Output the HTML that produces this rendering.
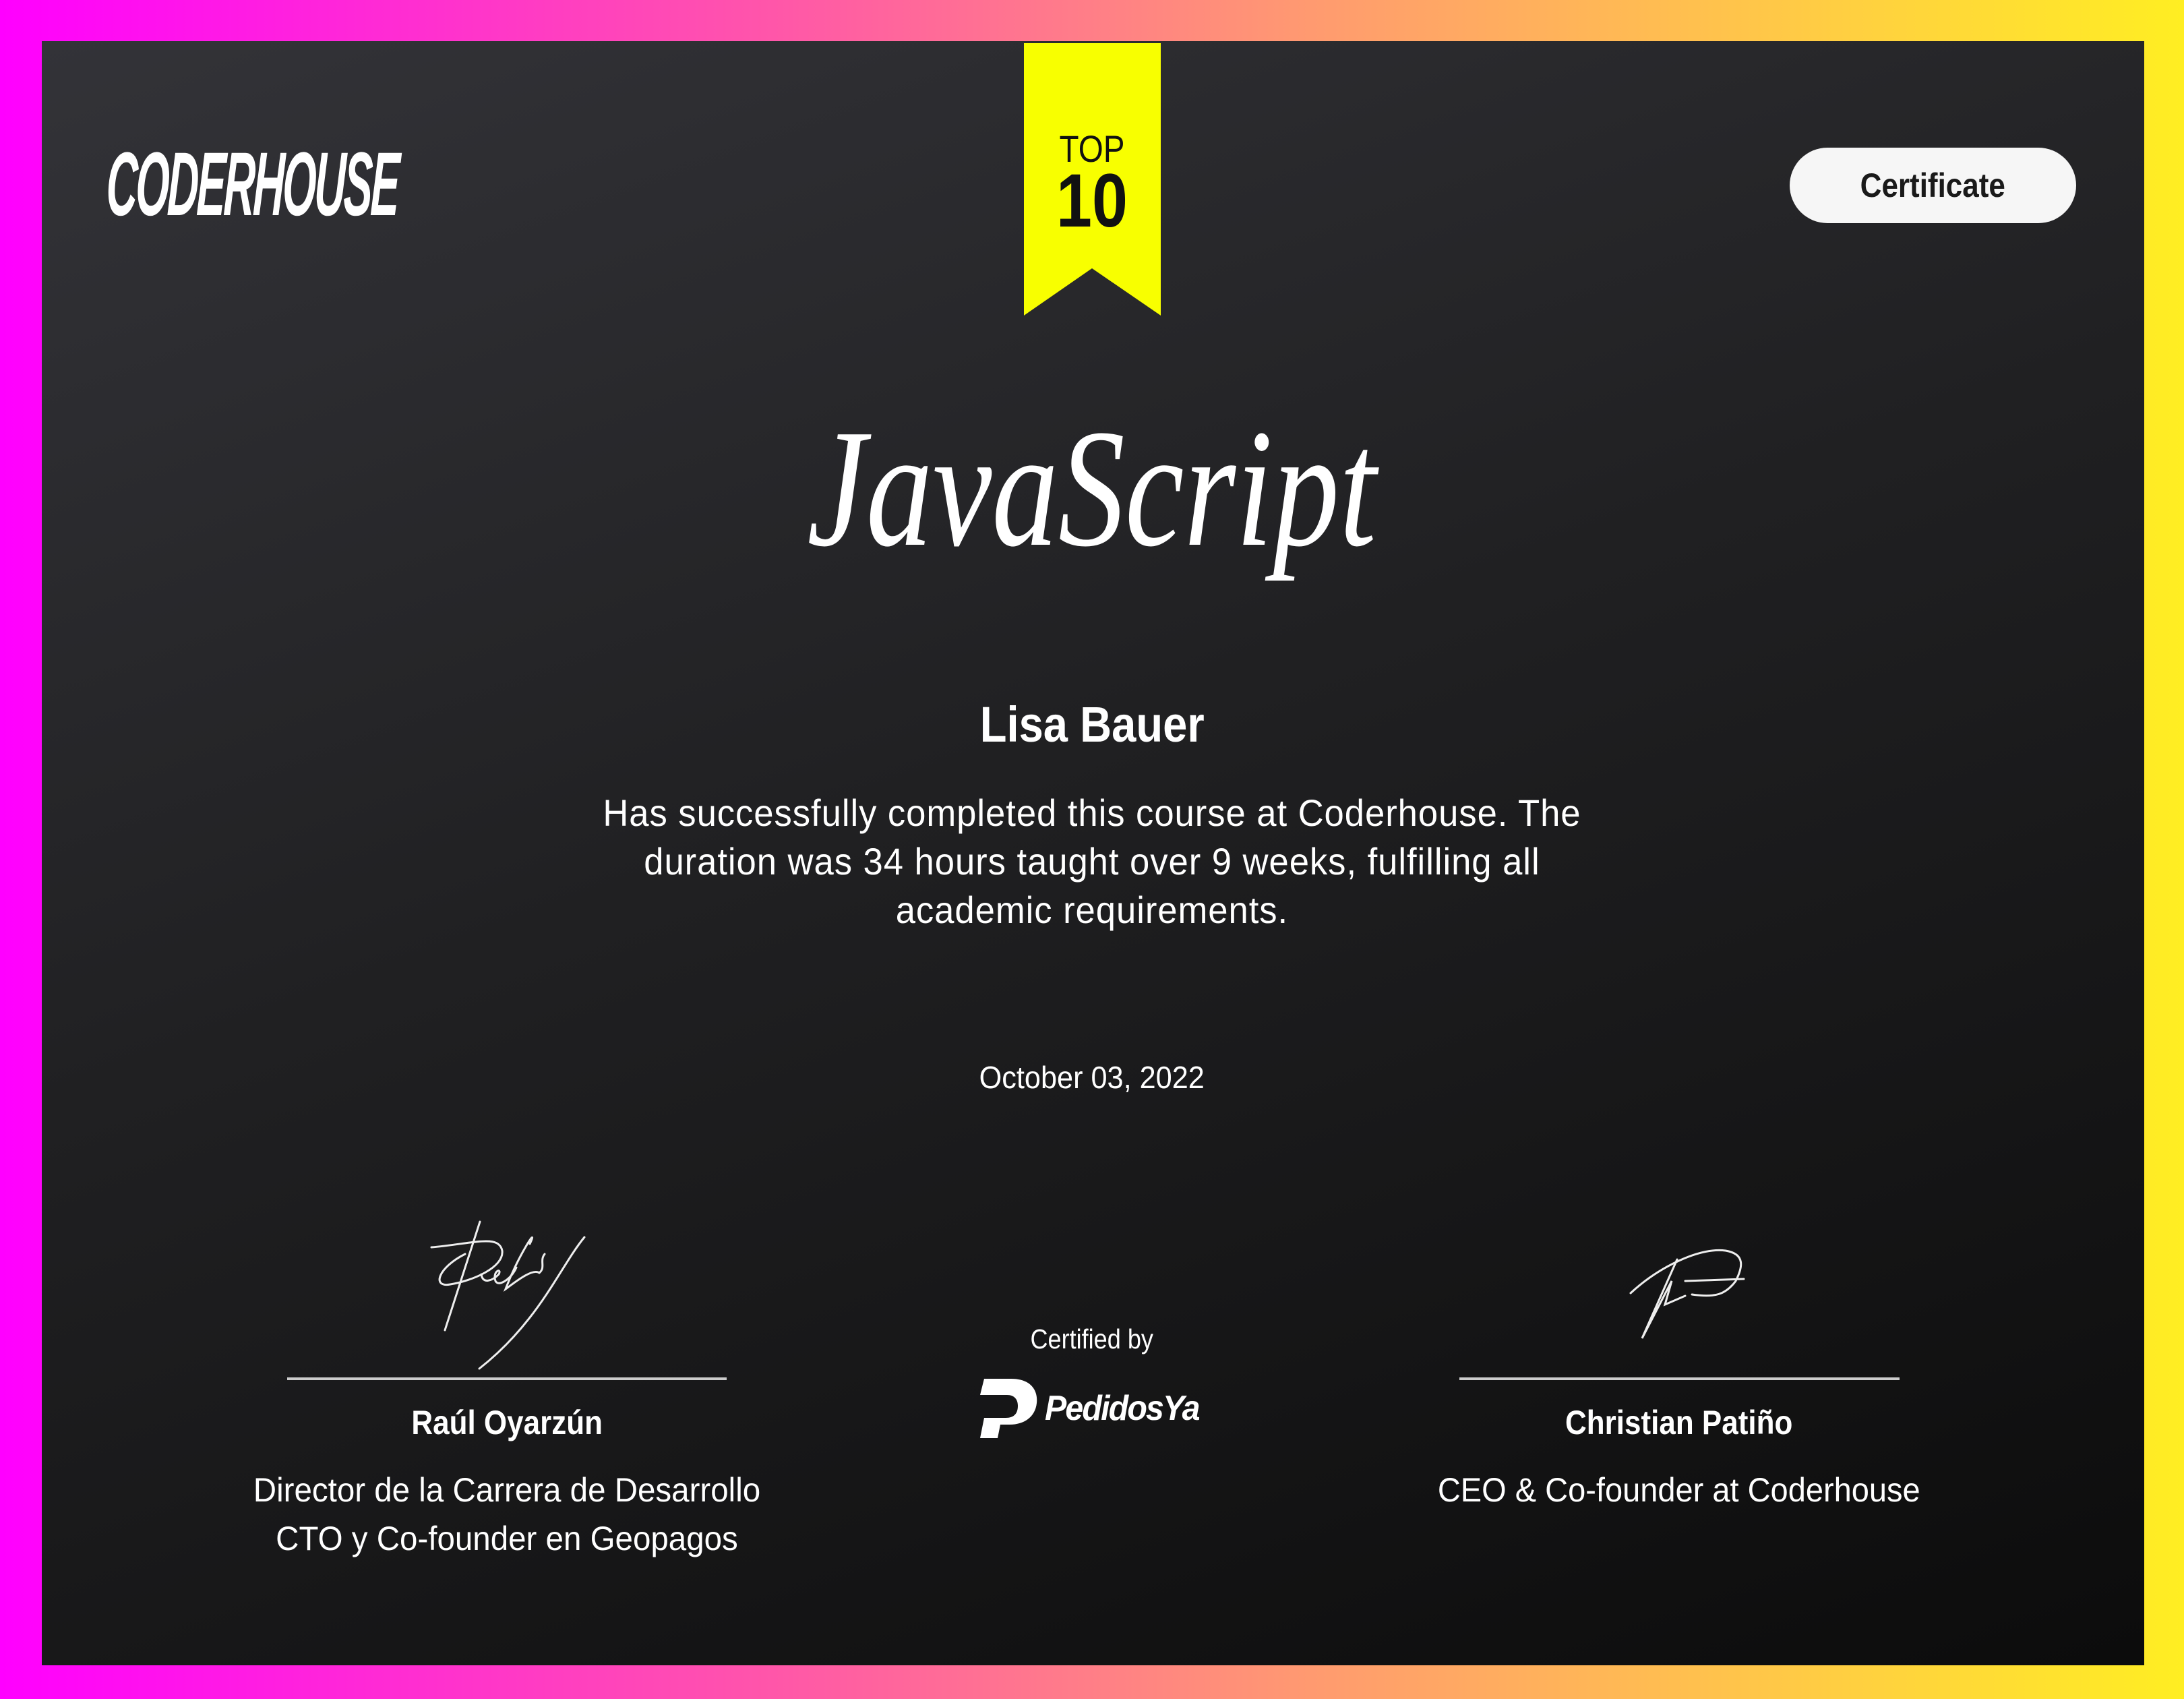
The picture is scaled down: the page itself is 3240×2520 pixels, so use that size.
<!DOCTYPE html>
<html><head><meta charset="utf-8"><style>
*{margin:0;padding:0;box-sizing:border-box}
body{width:3240px;height:2520px;overflow:hidden;background:linear-gradient(90deg,#ff00ff 0%,#ff55aa 35%,#ff9a70 60%,#ffd040 85%,#ffee22 100%);position:relative;font-family:"Liberation Sans",sans-serif;color:#fff}
#panel{position:absolute;left:62px;top:61px;width:3119px;height:2409px;background:linear-gradient(160deg,#333338 0%,#202022 45%,#0c0c0c 100%)}
.a{position:absolute;white-space:nowrap}
.c{text-align:center;left:0;width:3240px}
.cond{display:inline-block;transform:scaleX(0.88);transform-origin:center}
</style></head><body>
<div id="panel"></div>
<div class="a" style="left:158px;top:214px;font-size:134px;font-weight:bold;font-style:italic;letter-spacing:-6px;line-height:120px"><span style="display:inline-block;transform:scaleX(0.48) skewX(-4deg);transform-origin:left">CODERHOUSE</span></div>
<svg class="a" style="left:1519px;top:64px" width="203" height="404" viewBox="0 0 203 404"><path d="M0 0H203V404L101 334L0 404Z" fill="#f8ff00"/>
<text x="101" y="176" text-anchor="middle" font-family="Liberation Sans" font-size="56" fill="#111" transform="translate(101 0) scale(0.85 1) translate(-101 0)">TOP</text>
<text x="101" y="272" text-anchor="middle" font-family="Liberation Sans" font-weight="bold" font-size="112" fill="#111" transform="translate(101 0) scale(0.85 1) translate(-101 0)">10</text></svg>
<div class="a" style="left:2655px;top:219px;width:425px;height:112px;background:#f6f6f6;border-radius:56px;color:#1a1a1a;font-size:50px;font-weight:bold;line-height:112px;text-align:center"><span class="cond">Certificate</span></div>
<div class="a c" style="top:575px;font-family:'Liberation Serif',serif;font-style:italic;font-size:250px;line-height:300px"><span class="cond" style="transform:scaleX(0.79)">JavaScript</span></div>
<div class="a c" style="top:1030px;font-size:74px;font-weight:bold;line-height:90px"><span class="cond">Lisa Bauer</span></div>
<div class="a c" style="top:1170px;font-size:56px;line-height:72px;letter-spacing:1px"><span class="cond" style="transform:scaleX(0.94)">Has successfully completed this course at Coderhouse. The<br>duration was 34 hours taught over 9 weeks, fulfilling all<br>academic requirements.</span></div>
<div class="a c" style="top:1568px;font-size:46px;line-height:60px"><span class="cond" style="transform:scaleX(0.94)">October 03, 2022</span></div>
<svg class="a" style="left:0;top:0" width="3240" height="2520">
<g fill="none" stroke="#eee" stroke-width="3" stroke-linecap="round">
<path d="M712 1812L660 1973M640 1850C700 1845 740 1830 745 1855C748 1880 700 1900 668 1905C640 1910 650 1880 690 1860M714 1890C716 1905 730 1900 740 1890C745 1880 730 1885 735 1900C740 1910 760 1895 766 1880M786 1845C800 1815 770 1860 750 1912C760 1905 790 1880 800 1888C810 1880 800 1870 808 1860M867 1835C830 1880 800 1960 711 2030"/>
<path d="M2419 1918C2460 1880 2520 1850 2560 1855C2590 1860 2585 1880 2575 1900C2560 1920 2545 1925 2510 1920M2500 1900L2587 1897M2488 1868L2436 1985L2480 1900L2470 1935L2500 1922"/>
</g>
<rect x="426" y="2043" width="652" height="4" fill="#ccc"/>
<rect x="2165" y="2043" width="653" height="4" fill="#ccc"/>
<path d="M1460 2045h40c30 0 40 18 38 36c-2 20-18 32-40 32h-14l-4 20h-26l6-30h32c12 0 18-6 18-18c0-10-6-16-16-16h-40z" fill="#fff"/>
<text x="1550" y="2106" font-family="Liberation Sans" font-weight="bold" font-style="italic" font-size="52" fill="#fff" letter-spacing="-2" transform="translate(1550 0) scale(0.93 1) translate(-1550 0)">PedidosYa</text>
</svg>
<div class="a c" style="top:1958px;font-size:41px;line-height:56px"><span class="cond">Certified by</span></div>
<div class="a" style="left:252px;width:1000px;top:2078px;text-align:center;font-size:50px;font-weight:bold;line-height:64px"><span class="cond">Raúl Oyarzún</span></div>
<div class="a" style="left:252px;width:1000px;top:2174px;text-align:center;font-size:50px;line-height:72px"><span class="cond" style="transform:scaleX(0.95)">Director de la Carrera de Desarrollo<br>CTO y Co-founder en Geopagos</span></div>
<div class="a" style="left:1991px;width:1000px;top:2078px;text-align:center;font-size:50px;font-weight:bold;line-height:64px"><span class="cond">Christian Patiño</span></div>
<div class="a" style="left:1991px;width:1000px;top:2174px;text-align:center;font-size:50px;line-height:72px"><span class="cond" style="transform:scaleX(0.94)">CEO &amp; Co-founder at Coderhouse</span></div>
</body></html>
